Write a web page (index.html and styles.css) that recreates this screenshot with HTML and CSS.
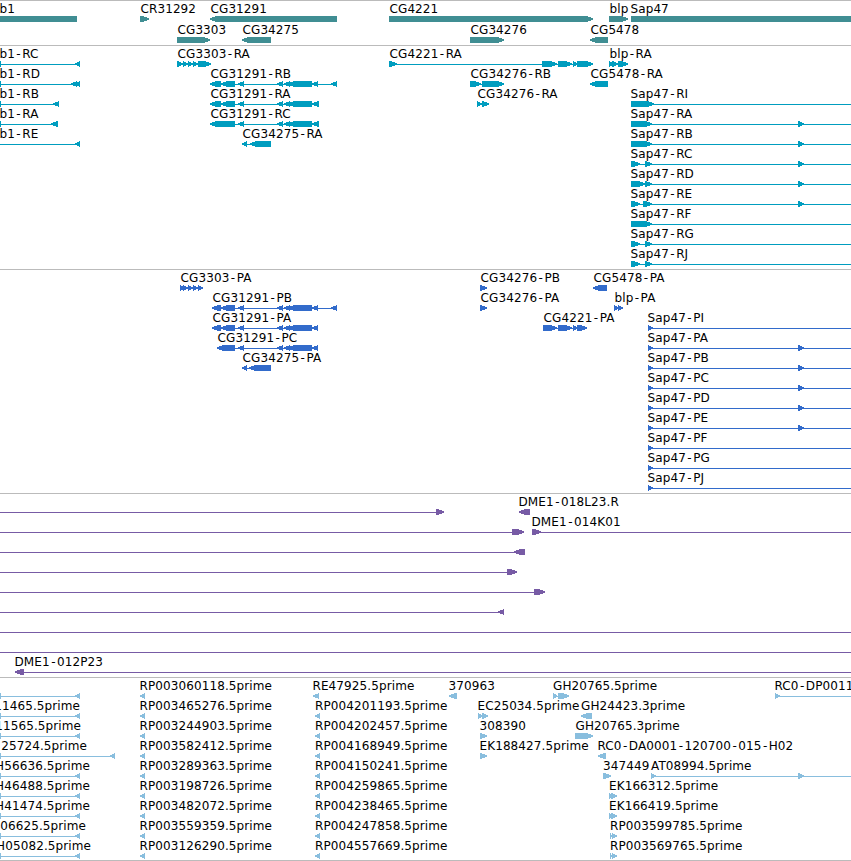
FILE: index.html
```html
<!DOCTYPE html>
<html lang="en">
<head>
  <meta charset="UTF-8">
  <title>Genome Browser</title>
  <link rel="stylesheet" href="styles.css">
</head>
<body>
  <main class="browser">
    <svg class="track genes" id="genes"></svg>
    <svg class="track transcripts" id="transcripts"></svg>
    <svg class="track proteins" id="proteins"></svg>
    <svg class="track bacs" id="bacs"></svg>
    <svg class="track ests" id="ests"></svg>
  </main>
  <script src="tracks.js"></script>
</body>
</html>
```
FILE: styles.css
```css
body {
  margin: 0;
  background: #fff;
  overflow: hidden;
}

.browser {
  display: flex;
  flex-direction: column;
  width: 851px;
  height: 860px;
  border-bottom: 1px solid #bbb;
}

.track {
  display: block;
  box-sizing: border-box;
  flex: none;
  width: 100%;
  height: 224px;
  border-top: 1px solid #bbb;
  overflow: hidden;
  shape-rendering: crispEdges;
}

.track text {
  fill: #000;
  font-family: "DejaVu Sans", sans-serif;
  font-size: 12px;
  letter-spacing: 0.1px;
  white-space: pre;
}

.genes {
  height: 45px;
  color: #408e93;
}

.transcripts {
  color: #009dbf;
}

.proteins {
  color: #326bcb;
}

.bacs {
  height: 184px;
  color: #775ba5;
}

.ests {
  height: 183px;
  color: #89bede;
}

.feature {
  fill: currentColor;
}
```
FILE: tracks.js
```js
const SVG = 'http://www.w3.org/2000/svg';
const END = 860; // past the right edge of the view

// [row, label, label x, strand, exons, line start, line end]
const genes = [
  [0, 'b1', -1, '<', [[-20, 77]]],
  [0, 'CR31292', 140, '>', [[140, 149]]],
  [0, 'CG31291', 210, '<', [[210, 337]]],
  [0, 'CG4221', 389, '>', [[389, 593]]],
  [0, 'blp', 609, '>', [[609, 628]]],
  [0, 'Sap47', 630, '>', [[631, 880]]],
  [1, 'CG3303', 177, '>', [[177, 210]]],
  [1, 'CG34275', 242, '<', [[242, 271]]],
  [1, 'CG34276', 470, '>', [[470, 504]]],
  [1, 'CG5478', 590, '<', [[590, 608]]]
];

const cg31291 = [[238, 244], [277, 283], [284, 290], [288, 312]];
const far = [798, 804];

const transcripts = [
  [0, 'b1-RC', -1, '<', [[-6, 1], [75, 80]]],
  [1, 'b1-RD', -1, '<', [[-6, 1], [71, 77], [75, 80]]],
  [2, 'b1-RB', -1, '<', [[-6, 1], [53, 59]]],
  [3, 'b1-RA', -1, '<', [[-6, 1], [51, 58]]],
  [4, 'b1-RE', -1, '<', [[75, 80]], 0],
  [0, 'CG3303-RA', 177, '>', [[177, 183], [183, 188], [188, 193], [193, 198], [198, 211]]],
  [1, 'CG31291-RB', 210, '<', [[210, 221], [221, 235], ...cg31291, [312, 318], [331, 337]]],
  [2, 'CG31291-RA', 210, '<', [[210, 221], [221, 235], ...cg31291, [312, 319]]],
  [3, 'CG31291-RC', 210, '<', [[210, 235], ...cg31291, [312, 319]]],
  [4, 'CG34275-RA', 242, '<', [[242, 247], [250, 271]]],
  [0, 'CG4221-RA', 389, '>', [[389, 397], [542, 557], [558, 572], [573, 577], [577, 593]]],
  [0, 'blp-RA', 609, '>', [[609, 613], [612, 618], [618, 628]]],
  [1, 'CG34276-RB', 470, '>', [[470, 481], [482, 504]]],
  [1, 'CG5478-RA', 590, '<', [[590, 608]]],
  [2, 'CG34276-RA', 477, '>', [[477, 482], [482, 489]]],
  [2, 'Sap47-RI', 630, '>', [[631, 654]], 631, END],
  [3, 'Sap47-RA', 630, '>', [[631, 652], far], 631, END],
  [4, 'Sap47-RB', 630, '>', [[631, 652], far], 631, END],
  [5, 'Sap47-RC', 630, '>', [[631, 640], [645, 652], far], 631, END],
  [6, 'Sap47-RD', 630, '>', [[631, 645], [645, 652], far], 631, END],
  [7, 'Sap47-RE', 630, '>', [[631, 640], [643, 652], far], 631, END],
  [8, 'Sap47-RF', 630, '>', [[631, 652]], 631, END],
  [9, 'Sap47-RG', 630, '>', [[631, 640], [645, 652]], 631, END],
  [10, 'Sap47-RJ', 630, '>', [[631, 640], [645, 652]], 631, END]
];

const proteins = [
  [0, 'CG3303-PA', 180, '>', [[180, 184], [183, 188], [188, 193], [193, 198], [198, 203]]],
  [1, 'CG31291-PB', 212, '<', [[212, 221], [221, 235], ...cg31291, [312, 318], [331, 337]]],
  [2, 'CG31291-PA', 212, '<', [[212, 221], [221, 235], ...cg31291, [312, 318]]],
  [3, 'CG31291-PC', 217, '<', [[217, 235], ...cg31291, [312, 318]]],
  [4, 'CG34275-PA', 242, '<', [[242, 247], [249, 271]]],
  [0, 'CG34276-PB', 480, '>', [[480, 487]]],
  [1, 'CG34276-PA', 480, '>', [[480, 487]]],
  [0, 'CG5478-PA', 593, '<', [[593, 607]]],
  [1, 'blp-PA', 614, '>', [[614, 618], [618, 623]]],
  [2, 'CG4221-PA', 543, '>', [[543, 557], [558, 572], [573, 577], [577, 587]]]
];
['I', 'A', 'B', 'C', 'D', 'E', 'F', 'G', 'J'].forEach((name, i) => {
  const exons = i > 0 && i < 6 ? [[648, 653], far] : [[648, 653]];
  proteins.push([i + 2, 'Sap47-P' + name, 647, '>', exons, 648, END]);
});

const bacs = [
  [0, '', 0, '>', [[436, 444]], 0],
  [0, 'DME1-018L23.R', 518, '<', [[519, 530]]],
  [1, '', 0, '>', [[512, 524]], 0],
  [1, 'DME1-014K01', 531, '>', [[532, 541]], 532, END],
  [2, '', 0, '<', [[514, 525]], 0],
  [3, '', 0, '>', [[507, 517]], 0],
  [4, '', 0, '>', [[534, 545]], 0],
  [5, '', 0, '<', [[498, 504]], 0],
  [6, '', 0, '>', [], 0, END],
  [7, '', 0, '>', [], 0, END],
  [8, 'DME1-012P23', 14, '<', [[15, 24]], 15, END]
];

const ests = [
  [0, 'RE47925.5prime', 312, '<', [[313, 319]]],
  [0, '370963', 448, '<', [[449, 457]]],
  [1, 'EC25034.5prime', 477, '>', [[478, 482], [482, 488]]],
  [2, '308390', 479, '>', [[480, 487]]],
  [3, 'EK188427.5prime', 479, '>', [[480, 487]]],
  [0, 'GH20765.5prime', 552.5, '>', [[553, 557], [558, 569]]],
  [1, 'GH24423.3prime', 580.5, '<', [[581, 592]]],
  [2, 'GH20765.3prime', 575, '>', [[575, 593]]],
  [3, 'RC0-DA0001-120700-015-H02', 597, '<', [[598, 606]]],
  [4, '347449', 602.5, '>', [[603, 611]]],
  [4, 'AT08994.5prime', 650.5, '>', [[651, 656], far], 651, END],
  [5, 'EK166312.5prime', 608.5, '>', [[609, 612], [611, 617]]],
  [6, 'EK166419.5prime', 608.5, '>', [[609, 612], [611, 617]]],
  [7, 'RP003599785.5prime', 609.5, '>', [[610, 612], [612, 617]]],
  [8, 'RP003569765.5prime', 609.5, '>', [[610, 612], [612, 617]]],
  [0, 'RC0-DP0011', 774, '>', [[775, 780]], 775, END]
];
// reads that start left of the view, labels placed by their right end
[['', 0], ['11465', 80], ['11565', 81], ['25724', 87], ['H56636', 90], ['H46488', 90],
  ['H41474', 90], ['06625', 86], ['H05082', 91]].forEach(([name, right], row) => {
  const end = row === 3 ? 115 : 80;
  ests.push([row, name && name + '.5prime', -right, '<', [[-6, 1], [end - 5, end]]]);
});
['060118', '465276', '244903', '582412', '289363', '198726', '482072', '559359', '126290']
  .forEach((id, row) => ests.push([row, 'RP003' + id + '.5prime', 139, '<', [[140, 145]]]));
['201193', '202457', '168949', '150241', '259865', '238465', '247858', '557669']
  .forEach((id, i) => ests.push([i + 1, 'RP004' + id + '.5prime', 314.5, '<', [[315, 320]]]));

function add(svg, tag, attrs) {
  const el = document.createElementNS(SVG, tag);
  for (const key in attrs) el.setAttribute(key, attrs[key]);
  svg.appendChild(el);
  return el;
}

// exon with its arrow head pointing along the strand
function exonPoints(a, b, y, strand) {
  const tip = strand === '>' ? b : a;
  const tail = strand === '>' ? a : b;
  const dir = strand === '>' ? -1 : 1;
  const head = Math.min(b - a, 7);
  const neck = tip + dir * head;
  const mid = tip + dir * head * 0.5;
  return `${tail},${y} ${neck},${y} ${mid},${y + 1} ${tip},${y + 2.5} ` +
    `${tip},${y + 3.6} ${mid},${y + 5} ${neck},${y + 6} ${tail},${y + 6}`;
}

function drawLabel(svg, label, x, y) {
  const fromEnd = x < -1;
  const text = add(svg, 'text', { x: fromEnd ? -x : x + 0.5, y });
  if (fromEnd) text.setAttribute('text-anchor', 'end');
  // extra room on both sides of a hyphen
  if (label.includes('-')) {
    const dx = [...label].map((c, i) => (c === '-' || label[i - 1] === '-' ? 1.4 : 0));
    text.setAttribute('dx', dx.join(' '));
  }
  text.textContent = label;
}

function drawTrack(id, features, step) {
  const svg = document.getElementById(id);
  features.forEach(([row, label, x, strand, exons, from, to]) => {
    const y = row * step + 15;
    const start = from !== undefined ? from : exons[0][0];
    const end = to !== undefined ? to : exons[exons.length - 1][1];
    if (exons.length !== 1 || from !== undefined) {
      add(svg, 'rect', { class: 'feature', x: start, y: y + 3, width: end - start, height: 1 });
    }
    exons.forEach(([a, b]) => {
      add(svg, 'polygon', { class: 'feature', points: exonPoints(a, b, y, strand) });
    });
    if (label) drawLabel(svg, label, x, y - 3);
  });
}

drawTrack('genes', genes, 21);
drawTrack('transcripts', transcripts, 20);
drawTrack('proteins', proteins, 20);
drawTrack('bacs', bacs, 20);
drawTrack('ests', ests, 20);
```
